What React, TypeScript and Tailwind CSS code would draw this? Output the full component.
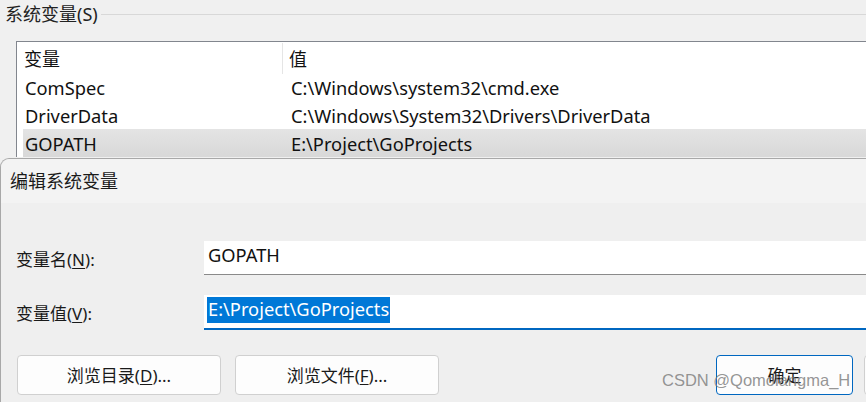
import React from "react";

const font = "font-['Noto_Sans','Noto_Sans_CJK_SC',sans-serif]";

const rows = [
  { name: "ComSpec", value: "C:\\Windows\\system32\\cmd.exe" },
  { name: "DriverData", value: "C:\\Windows\\System32\\Drivers\\DriverData" },
  { name: "GOPATH", value: "E:\\Project\\GoProjects", selected: true },
];

function Button({ children, primary, className = "" }: { children?: React.ReactNode; primary?: boolean; className?: string }) {
  return (
    <div
      className={`shrink-0 h-[40px] rounded-[4px] border bg-[#fdfdfd] flex items-center justify-center text-[17px] text-[#1a1a1a] ${
        primary ? "border-[#0067c0]" : "border-[#d0d0d0]"
      } ${className}`}
    >
      {children}
    </div>
  );
}

export default function App() {
  return (
    <div className={`w-[866px] h-[402px] overflow-hidden bg-[#f0f0f0] relative ${font} text-[#111] leading-none`}>
      {/* group box legend */}
      <div className="h-[30px] flex items-center -mt-[1px]">
        <span className="pl-[5px] pr-[3px] text-[18px] text-[#222]">系统变量(S)</span>
        <div className="flex-1 h-px bg-[#d8d8d8] mt-[1px]" />
      </div>

      {/* list view */}
      <div className="ml-[16px] mt-[12px] h-[116px] bg-white border-t border-l border-[#82868e]">
        <div className="h-[31px] flex items-center text-[18px]">
          <div className="w-[266px] h-full flex items-center pl-[7px] pt-[2px] border-r border-[#e5e5e5] mt-[1px]">变量</div>
          <div className="pl-[6px] pt-[2px]">值</div>
        </div>
        {rows.map((r) => (
          <div
            key={r.name}
            className={`h-[28px] flex items-center text-[18.3px] ml-[6px] pt-[2px] ${
              r.selected ? "bg-linear-to-b from-[#e4e4e4] to-[#d8d8d8]" : ""
            }`}
          >
            <div className="w-[261px] pl-[2px]">{r.name}</div>
            <div className="pl-[7px]">{r.value}</div>
          </div>
        ))}
      </div>

      {/* edit dialog */}
      <div className="absolute left-0 top-[158px] w-[880px] h-[260px] rounded-tl-[9px] border-t border-l border-[#a8a8a8] bg-[#efefef]">
        <div className="h-[44px] bg-[#f3f3f3] rounded-tl-[9px] flex items-center pl-[9px] text-[18px] text-[#1a1a1a]">
          编辑系统变量
        </div>
        <div className="mt-[38px] flex items-center">
          <div className="w-[203px] shrink-0 pl-[15px] text-[17px] text-[#1a1a1a] pt-[2px]">
            变量名(<span className="underline underline-offset-2">N</span>):
          </div>
          <div className="flex-1 h-[34px] bg-white border-b border-[#8a8a8a] flex items-center pl-[4px] text-[18.3px] pb-[4px]">
            GOPATH
          </div>
        </div>
        <div className="mt-[20px] flex items-center">
          <div className="w-[203px] shrink-0 pl-[15px] text-[17px] text-[#1a1a1a] pt-[2px]">
            变量值(<span className="underline underline-offset-2">V</span>):
          </div>
          <div className="flex-1 h-[35px] bg-white border-b-2 border-[#0067c0] flex items-center pl-[3px] pb-[4px]">
            <span className="bg-[#0078d7] text-white text-[18.3px] h-[26px] flex items-center px-[1px]">
              E:\Project\GoProjects
            </span>
          </div>
        </div>
        <div className="mt-[25px] flex items-start">
          <Button className="ml-[16px] w-[204px]">
            浏览目录(<span className="underline underline-offset-2">D</span>)...
          </Button>
          <Button className="ml-[14px] w-[204px]">
            浏览文件(<span className="underline underline-offset-2">F</span>)...
          </Button>
          <Button primary className="ml-[277px] w-[137px]">
            确定
          </Button>
          <Button className="ml-[11px] w-[137px]" />
        </div>
      </div>

      {/* watermark */}
      <div className="absolute left-[662px] top-[372px] text-[16.5px] text-[#7a7a7a]/80 font-['Liberation_Sans',sans-serif] whitespace-nowrap">
        CSDN @Qomolangma_H
      </div>
    </div>
  );
}
